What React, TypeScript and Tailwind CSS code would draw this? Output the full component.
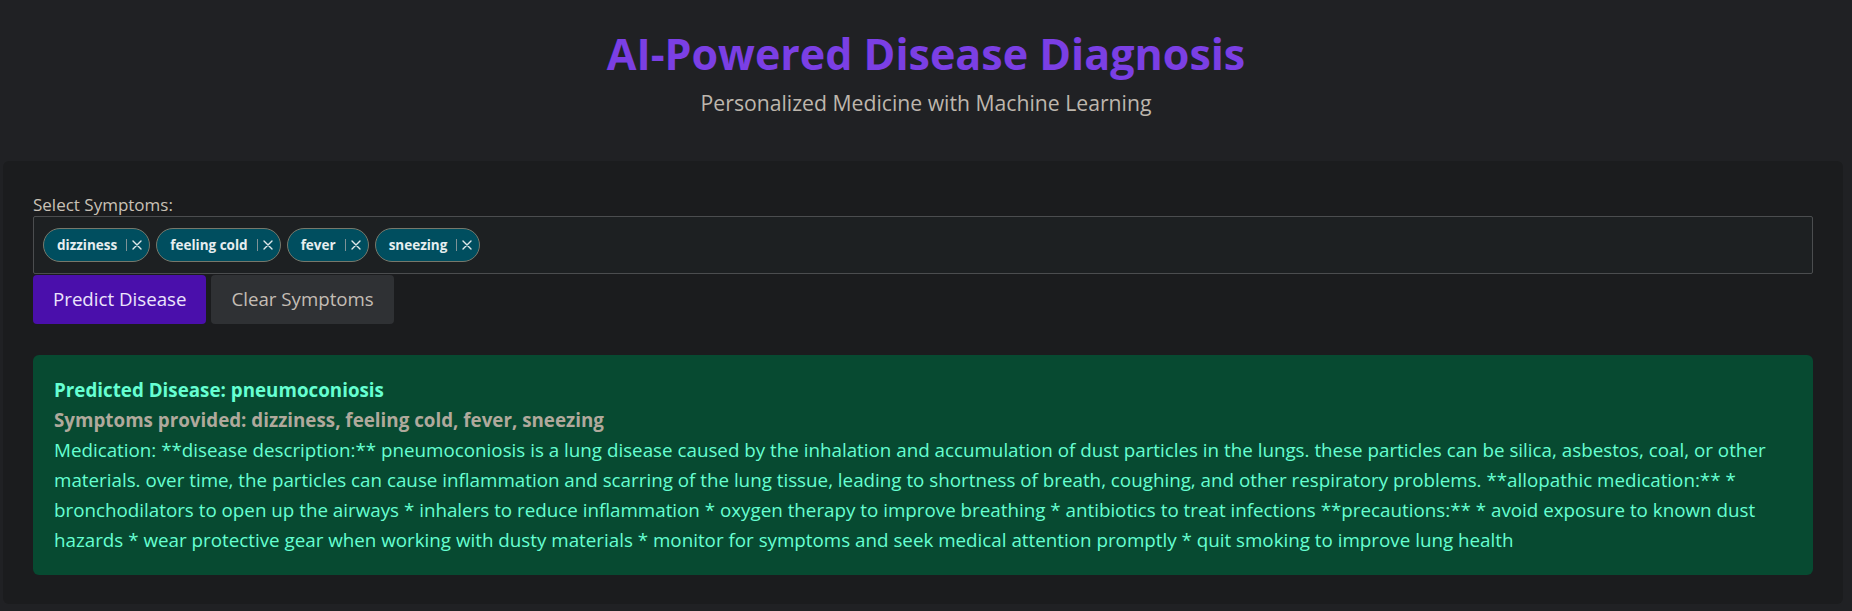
import React, { useState } from 'react';

const FONT = "font-['Open_Sans','Noto_Sans',sans-serif]";

const initialSymptoms = ['dizziness', 'feeling cold', 'fever', 'sneezing'];

const medication =
  'Medication: **disease description:** pneumoconiosis is a lung disease caused by the inhalation and accumulation of dust particles in the lungs. these particles can be silica, asbestos, coal, or other materials. over time, the particles can cause inflammation and scarring of the lung tissue, leading to shortness of breath, coughing, and other respiratory problems. **allopathic medication:** * bronchodilators to open up the airways * inhalers to reduce inflammation * oxygen therapy to improve breathing * antibiotics to treat infections **precautions:** * avoid exposure to known dust hazards * wear protective gear when working with dusty materials * monitor for symptoms and seek medical attention promptly * quit smoking to improve lung health';

const Chip = ({ label, onRemove }: { label: string; onRemove: () => void }) => (
  <div className="flex items-center h-[34px] rounded-full border border-[#77786b] bg-[#004e5f] pl-[13px] pr-[7px]">
    <span className="text-[13.5px] font-bold text-[#e6eef0]">{label}</span>
    <span className="ml-[9px] w-px h-[12px] bg-[#7f9296]" />
    <button onClick={onRemove} className="ml-[5px] flex items-center justify-center w-[10px] h-[10px]" aria-label="Remove">
      <svg width="10" height="10" viewBox="0 0 10 10" fill="none" stroke="#dfe8ea" strokeWidth="1.4" strokeLinecap="round">
        <path d="M1 1l8 8M9 1L1 9" />
      </svg>
    </button>
  </div>
);

export default function App() {
  const [symptoms, setSymptoms] = useState<string[]>(initialSymptoms);

  return (
    <div className={`min-h-screen bg-[#202124] ${FONT}`}>
      {/* Header */}
      <header className="pt-[29px] text-center">
        <h1 className="text-[43px] leading-[50px] font-bold text-[#7b3fe4]">AI-Powered Disease Diagnosis</h1>
        <p className="mt-[10px] text-[21.2px] leading-[28px] text-[#bdb6ad]">Personalized Medicine with Machine Learning</p>
      </header>

      {/* Main panel */}
      <main className="mt-[44px] ml-[3px] mr-[9px] rounded-[6px] bg-[#1b1c1e] pt-[32px] px-[30px] pb-[29px]">
        <label className="block text-[17px] leading-[23px] font-medium text-[#c9c1b6]">Select Symptoms:</label>
        <div className="flex items-center gap-[6px] h-[58px] px-[9px] rounded-[2px] border border-[#4b4d4f] bg-[#1d2022]">
          {symptoms.map((s) => (
            <Chip key={s} label={s} onRemove={() => setSymptoms(symptoms.filter((x) => x !== s))} />
          ))}
        </div>

        <div className="mt-[1px] flex gap-[5px]">
          <button className="h-[49px] px-[20px] rounded-[4px] bg-[#4a0fab] text-[18.7px] text-[#ece4fb]">Predict Disease</button>
          <button
            onClick={() => setSymptoms([])}
            className="h-[49px] px-[20px] rounded-[4px] bg-[#2f3134] text-[18.7px] text-[#c4bdb4]"
          >
            Clear Symptoms
          </button>
        </div>

        {/* Result */}
        <div className="mt-[31px] rounded-[6px] bg-[#074a31] py-[20px] px-[21px] text-[18.8px] leading-[30px]">
          <p className="font-bold text-[#66ffd2]">Predicted Disease: pneumoconiosis</p>
          <p className="font-bold text-[#b0a99c]">Symptoms provided: dizziness, feeling cold, fever, sneezing</p>
          <p className="text-[#66ffd2]">{medication}</p>
        </div>
      </main>
    </div>
  );
}
